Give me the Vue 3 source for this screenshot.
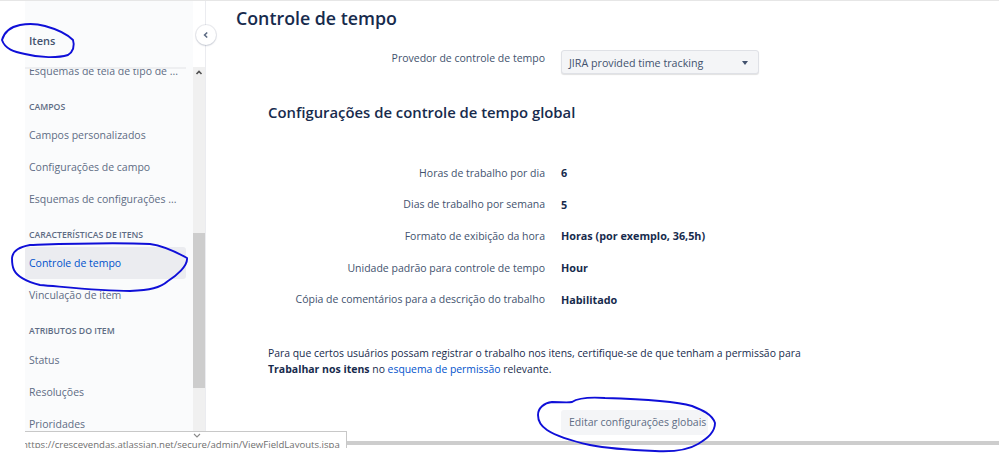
<script setup>
const groups = [
  { title: 'CAMPOS', items: ['Campos personalizados', 'Configurações de campo', 'Esquemas de configurações ...'] },
  { title: 'CARACTERÍSTICAS DE ITENS', items: ['Controle de tempo', 'Vinculação de item'] },
  { title: 'ATRIBUTOS DO ITEM', items: ['Status', 'Resoluções', 'Prioridades'] },
]
const rows = [
  ['Horas de trabalho por dia', '6'],
  ['Dias de trabalho por semana', '5'],
  ['Formato de exibição da hora', 'Horas (por exemplo, 36,5h)'],
  ['Unidade padrão para controle de tempo', 'Hour'],
  ['Cópia de comentários para a descrição do trabalho', 'Habilitado'],
]
</script>

<template>
  <div class="page">
    <aside class="side">
      <div class="side-head">Itens</div>
      <div class="side-body">
        <div class="side-list">
          <div class="cut">Esquemas de tela de tipo de ...</div>
          <section v-for="g in groups" :key="g.title" class="group">
            <h4>{{ g.title }}</h4>
            <a v-for="i in g.items" :key="i" class="item" :class="{ on: i === 'Controle de tempo' }">{{ i }}</a>
          </section>
        </div>
      </div>
    </aside>
    <div class="sbar">
      <div class="sbar-top"></div>
      <svg class="arr" width="12" height="12" viewBox="0 0 12 12"><path d="M3.5 7 L6 4.5 L8.5 7" fill="none" stroke="#505050" stroke-width="1.6"/></svg>
      <div class="track"><div class="thumb"></div></div>
    </div>

    <main class="main">
      <h1>Controle de tempo</h1>
      <div class="frow top">
        <span class="lab up">Provedor de controle de tempo</span>
        <div class="select">
          <span>JIRA provided time tracking</span>
          <i class="caret"></i>
        </div>
      </div>
      <h2>Configurações de controle de tempo global</h2>
      <div class="rows">
        <div v-for="r in rows" :key="r[0]" class="frow">
          <span class="lab">{{ r[0] }}</span>
          <b class="val">{{ r[1] }}</b>
        </div>
      </div>
      <p class="note">
        Para que certos usuários possam registrar o trabalho nos itens, certifique-se de que tenham a permissão para<br>
        <b>Trabalhar nos itens</b> no <a>esquema de permissão</a> relevante.
      </p>
      <div class="actions"><button>Editar configurações globais</button></div>
    </main>

    <button class="collapse" aria-label="Recolher">
      <svg width="10" height="10" viewBox="0 0 10 10"><path d="M6.2 2.5 L3.6 5 L6.2 7.5" fill="none" stroke="#5e6c84" stroke-width="1.6"/></svg>
    </button>

    <div class="status"><div class="status-text">https://crescevendas.atlassian.net/secure/admin/ViewFieldLayouts.jspa</div></div>
    <svg class="status-arrow" width="12" height="8" viewBox="0 0 12 8"><path d="M3 2 L6 5 L9 2" fill="none" stroke="#8a8a8a" stroke-width="1.1"/></svg>
    <div class="hscroll"></div>

    <svg class="ink" width="999" height="453" viewBox="0 0 999 453">
      <path d="M2 40 C4 33 10 27 20 25 C30 23 38 24 45 26 C56 29 66 33 73 40 C75 46 73 52 68 55 C58 58 40 58 25 54 C14 52 5 49 2 40 Z"/>
      <path d="M12 258 C13 250 20 247 30 245 C60 244 110 242 150 244 C165 246 178 253 187 258 C188 266 176 276 168 281 C160 288 150 290 130 291 C100 291 65 287 40 285 C28 282 18 278 14 270 C12 266 12 262 12 258 Z"/>
      <path d="M538 415 C538 408 544 403 552 402 C560 402 568 403 572 402 C578 398 590 397 605 398 C640 399 675 401 692 406 C702 410 712 414 715 423 C715 432 708 438 698 444 C690 449 675 452 655 451 C630 450 605 448 590 445 C572 441 556 436 547 430 C541 426 538 420 538 415 Z"/>
    </svg>
  </div>
</template>

<style>
html, body { margin: 0; background: #fff; }
</style>

<style scoped>
.page {
  position: relative;
  width: 999px;
  height: 453px;
  overflow: hidden;
  display: flex;
  padding-left: 25px;
  box-sizing: border-box;
  background: #fff;
  border-top: 1px solid #e6e6e6;
  font-family: "Open Sans", "Noto Sans", sans-serif;
  font-size: 10.5px;
  color: #172b4d;
}
.side {
  width: 168px;
  flex: none;
  background: #fafbfc;
  display: flex;
  flex-direction: column;
}
.side-head {
  height: 68px;
  box-sizing: border-box;
  width: 161px;
  padding: 32px 0 0 4px;
  font-size: 11px;
  font-weight: 600;
  line-height: 16px;
  color: #42526e;
  background: #fafbfc;
  border-bottom: 2px solid #eeeff1;
}
.side-body { flex: 1; display: flex; min-height: 0; }
.side-list { width: 161px; flex: none; overflow: hidden; }
.cut {
  margin-top: -6px;
  height: 16px;
  line-height: 16px;
  padding-left: 4px;
  color: #5e6c84;
  white-space: nowrap;
}
.group h4 {
  margin: 0;
  padding: 12px 0 0 4px;
  font-size: 8.7px;
  font-weight: 600;
  line-height: 16px;
  color: #5e6c84;
  white-space: nowrap;
}
.group:first-of-type h4 { padding-top: 20px; }
.group:last-of-type .item:first-of-type { margin-top: 5px; }
.item {
  display: block;
  height: 32px;
  line-height: 32px;
  padding-left: 4px;
  color: #5e6c84;
  border-radius: 3px;
  white-space: nowrap;
}
.group h4 + .item { margin-top: 4px; }
.item.on { background: #ebecf0; color: #0052cc; }
.sbar {
  width: 12px;
  flex: none;
  background: #f0f0f0;
  display: flex;
  flex-direction: column;
  border-right: 1px solid #ebecf0;
}
.sbar-top { height: 66px; flex: none; background: #fff; }
.arr { flex: none; }
.track { flex: 1; padding-top: 154px; }
.thumb { height: 155px; background: #cdcdcd; }
.main { flex: 1; padding-left: 30px; min-width: 0; }
h1 {
  margin: 0;
  padding-top: 5px;
  font-size: 17.8px;
  line-height: 24px;
  font-weight: 600;
  color: #172b4d;
}
h2 {
  margin: 0;
  padding: 27px 0 0 32px;
  font-size: 14.85px;
  line-height: 22px;
  font-weight: 600;
  color: #172b4d;
}
.frow { display: flex; align-items: center; gap: 16px; height: 31.6px; }
.lab { width: 309px; text-align: right; color: #42526e; flex: none; white-space: nowrap; }
.lab.up { align-self: flex-start; line-height: 16px; }
.val { font-size: 10.8px; font-weight: 700; color: #172b4d; }
.top { height: 24px; margin-top: 20px; }
.select {
  width: 189px;
  height: 22px;
  border: 1px solid #dfe1e6;
  border-radius: 3px;
  background: #f4f5f7;
  box-shadow: 0 1px 1px rgba(0,0,0,.12);
  padding: 1px 0 0 7px;
  box-sizing: content-box;
  height: 21px;
  display: flex;
  align-items: center;
  justify-content: space-between;
  color: #42526e;
  font-size: 10.7px;
}
.caret {
  width: 0; height: 0;
  margin-right: 10px;
  border-left: 3.5px solid transparent;
  border-right: 3.5px solid transparent;
  border-top: 4px solid #42526e;
}
.rows { margin-top: 34px; }
.note {
  margin: 30px 0 0 32px;
  font-size: 10.4px;
  line-height: 16px;
  color: #172b4d;
  white-space: nowrap;
}
.note b { font-size: 10.5px; }
.note a { color: #0052cc; }
.actions { padding: 33px 0 0 325px; }
.actions button {
  display: block;
  height: 25px;
  width: 147px;
  padding: 0 0 0 8px;
  text-align: left;
  border: 0;
  border-radius: 3px;
  background: #f4f5f7;
  color: #5e6c84;
  font: inherit;
  white-space: nowrap;
}
.collapse {
  position: absolute;
  left: 196px;
  top: 24px;
  width: 20px;
  height: 20px;
  padding: 0;
  border-radius: 50%;
  border: 0;
  background: #fff;
  box-shadow: 0 0 0 1px rgba(9,30,66,.08), 0 1px 2px rgba(9,30,66,.15);
  display: flex;
  align-items: center;
  justify-content: center;
}
.status {
  position: absolute;
  left: 25px;
  top: 430px;
  width: 322px;
  bottom: 0;
  box-sizing: border-box;
  background: #fff;
  overflow: hidden;
}
.status-text {
  height: 17px;
  padding-top: 7px;
  box-sizing: border-box;
  border-top: 1px solid #c8c8c8;
  border-right: 1px solid #c8c8c8;
  text-indent: -3px;
  font-size: 9.58px;
  line-height: 11px;
  color: #6f6f6f;
  white-space: nowrap;
  overflow: hidden;
}
.status-arrow { position: absolute; left: 191px; top: 431px; }
.hscroll {
  position: absolute;
  left: 347px;
  right: 0;
  top: 440px;
  height: 4px;
  background: #cdcdcd;
}
.ink { position: absolute; left: 0; top: -1px; pointer-events: none; }
.ink path { fill: none; stroke: #0f0fd8; stroke-width: 1.9; }
</style>
